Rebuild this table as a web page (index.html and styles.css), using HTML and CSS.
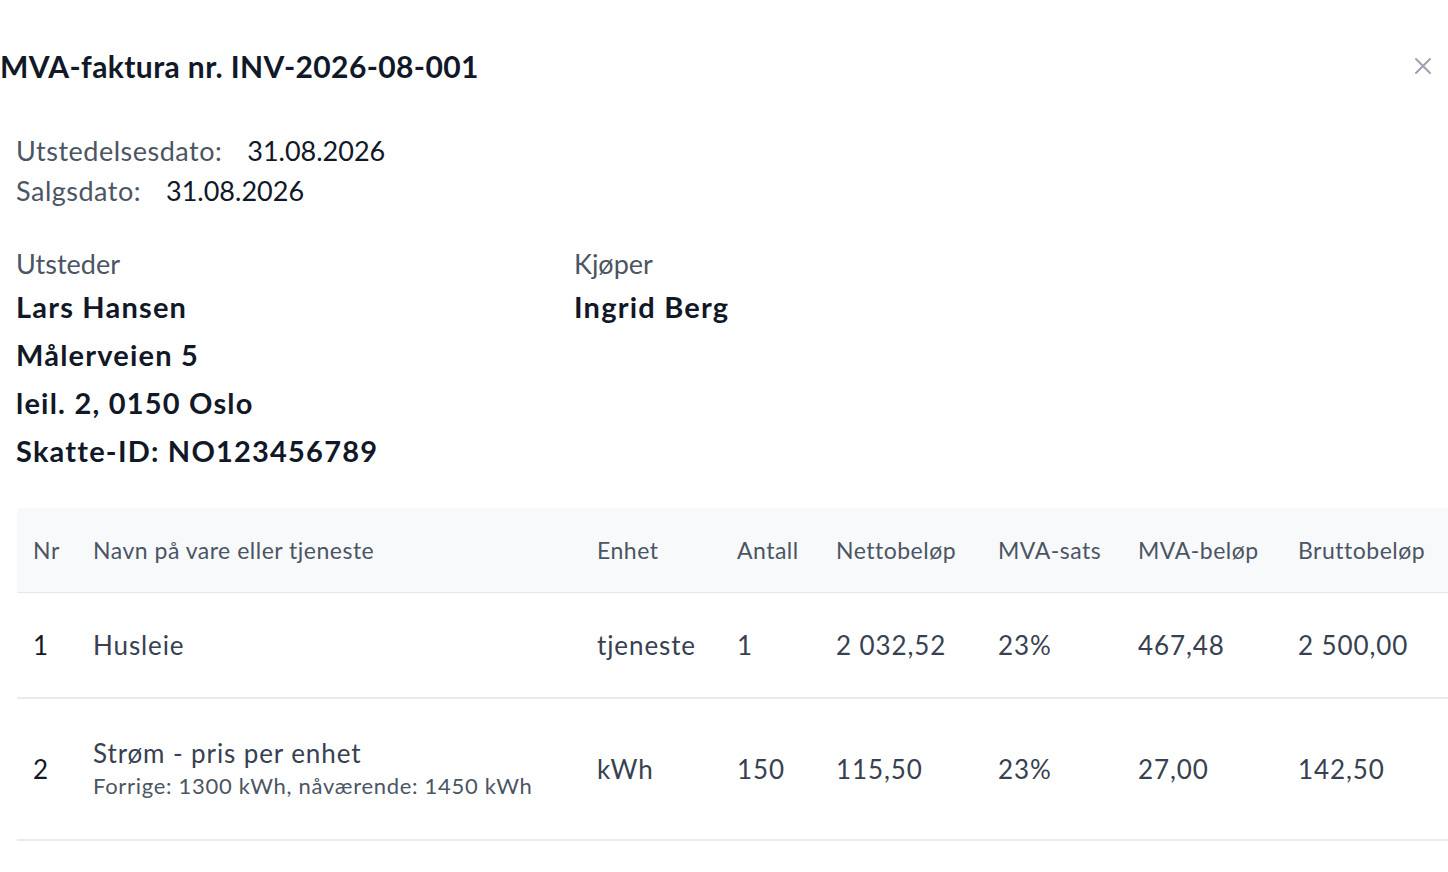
FILE: index.html
```html
<!DOCTYPE html>
<html lang="no">
<head>
<meta charset="utf-8">
<title>MVA-faktura</title>
<link rel="stylesheet" href="styles.css">
</head>
<body>
<div class="modal">
  <header class="modal-head">
    <h1 class="title">MVA-faktura nr. INV-2026-08-001</h1>
    <button class="close" aria-label="Lukk">
      <svg width="20" height="20" viewBox="0 0 20 20"><path d="M3 3L17 17M17 3L3 17" stroke="#9ca3af" stroke-width="2" stroke-linecap="round"/></svg>
    </button>
  </header>
  <div class="content">
    <div class="dates">
      <div class="date-row"><span class="label">Utstedelsesdato:</span><span class="value">31.08.2026</span></div>
      <div class="date-row"><span class="label">Salgsdato:</span><span class="value">31.08.2026</span></div>
    </div>
    <div class="parties">
      <div class="party issuer">
        <div class="party-label">Utsteder</div>
        <div class="party-line">Lars Hansen</div>
        <div class="party-line">Målerveien 5</div>
        <div class="party-line">leil. 2, 0150 Oslo</div>
        <div class="party-line">Skatte-ID: NO123456789</div>
      </div>
      <div class="party">
        <div class="party-label">Kjøper</div>
        <div class="party-line">Ingrid Berg</div>
      </div>
    </div>
    <table class="items">
      <colgroup>
        <col class="c-nr"><col class="c-name"><col class="c-unit"><col class="c-qty"><col class="c-net"><col class="c-rate"><col class="c-vat"><col class="c-gross">
      </colgroup>
      <thead>
        <tr><th>Nr</th><th>Navn på vare eller tjeneste</th><th>Enhet</th><th>Antall</th><th>Nettobeløp</th><th>MVA-sats</th><th>MVA-beløp</th><th>Bruttobeløp</th></tr>
      </thead>
      <tbody>
        <tr class="r1"><td class="nr">1</td><td>Husleie</td><td>tjeneste</td><td>1</td><td>2 032,52</td><td>23%</td><td>467,48</td><td>2 500,00</td></tr>
        <tr class="r2"><td class="nr">2</td><td><div class="item-name">Strøm - pris per enhet</div><div class="item-sub">Forrige: 1300 kWh, nåværende: 1450 kWh</div></td><td>kWh</td><td>150</td><td>115,50</td><td>23%</td><td>27,00</td><td>142,50</td></tr>
      </tbody>
    </table>
  </div>
</div>
</body>
</html>
```

FILE: styles.css
```css
* { box-sizing: border-box; }
html, body { margin: 0; padding: 0; background: #ffffff; }
body {
  font-family: "Lato", "Open Sans", sans-serif;
  color: #111827;
  width: 1448px;
  height: 872px;
  overflow: hidden;
}
.modal { width: 1448px; }
.modal-head {
  display: flex;
  align-items: center;
  justify-content: space-between;
  height: 131px;
  padding: 0 15px 0 0;
}
.title {
  margin: 0;
  font-size: 30px;
  font-weight: 700;
  color: #111827;
  line-height: 36px;
  letter-spacing: 0.4px;
}
.close {
  border: 0;
  background: none;
  padding: 0;
  width: 20px;
  height: 20px;
  cursor: pointer;
  display: flex;
}
.content { padding-left: 16px; }
.dates { display: flex; flex-direction: column; }
.date-row { display: flex; gap: 25px; font-size: 27px; line-height: 40px; }
.label { color: #4b5563; letter-spacing: 0.5px; }
.value { color: #111827; }
.parties {
  display: flex;
  margin-top: 39px;
}
.party.issuer { width: 558px; }
.party-label { font-size: 27px; line-height: 28px; color: #4b5563; margin-bottom: 5px; }
.party-line { font-size: 29px; font-weight: 700; line-height: 48px; color: #111827; letter-spacing: 1.2px; }
.items {
  margin-top: 33px;
  margin-left: 1px;
  width: 1440px;
  border-collapse: collapse;
  table-layout: fixed;
}
.c-nr { width: 60px; }
.c-name { width: 504px; }
.c-unit { width: 140px; }
.c-qty { width: 99px; }
.c-net { width: 162px; }
.c-rate { width: 140px; }
.c-vat { width: 160px; }
.c-gross { width: 175px; }
.items th {
  background: #f8f9fb;
  height: 84px;
  text-align: left;
  font-weight: 400;
  font-size: 23px;
  letter-spacing: 0.5px;
  color: #4b5563;
  padding: 0 0 0 16px;
  white-space: nowrap;
  border-bottom: 1px solid #e5e7eb;
}
.items td {
  text-align: left;
  font-size: 26px;
  letter-spacing: 0.9px;
  color: #374151;
  padding: 0 0 0 16px;
  white-space: nowrap;
  border-bottom: 2px solid #e9eaee;
  vertical-align: middle;
}
.items td.nr { color: #111827; }
.r1 td { height: 106px; }
.r2 td { height: 142px; }
.item-name { font-size: 26px; line-height: 34px; }
.item-sub { font-size: 22px; line-height: 32px; color: #4b5563; letter-spacing: 0.7px; }
```
